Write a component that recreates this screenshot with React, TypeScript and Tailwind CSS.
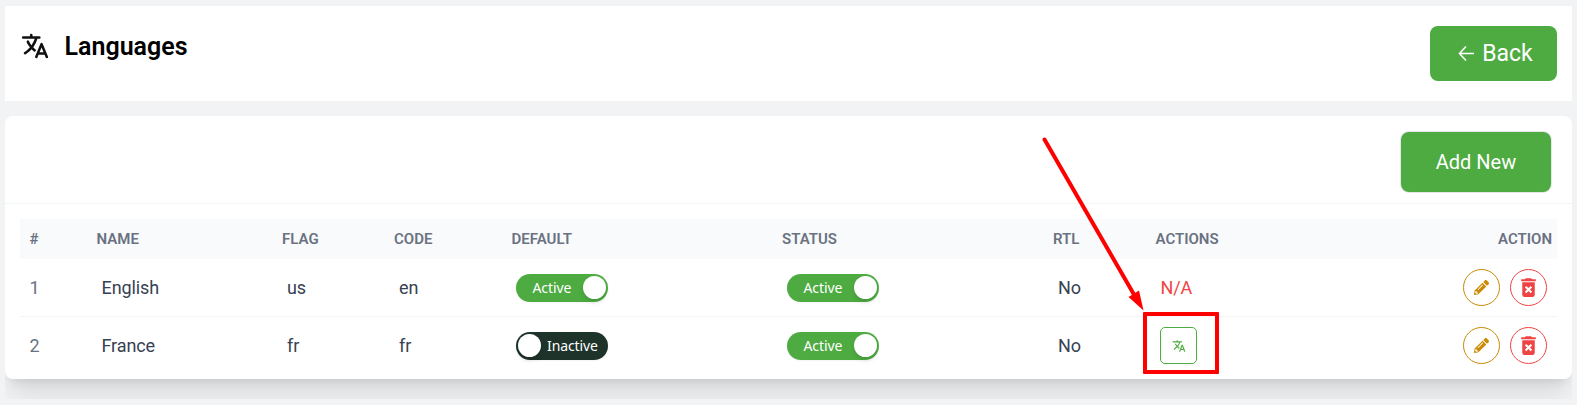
import clsx from "clsx";
import { FaPencilAlt } from "react-icons/fa";
import { IoLanguage } from "react-icons/io5";
import { MdDeleteForever, MdTranslate } from "react-icons/md";

type Language = {
  id: number;
  name: string;
  flag: string;
  code: string;
  isDefault: boolean;
  status: boolean;
  rtl: boolean;
  translatable: boolean;
};

const languages: Language[] = [
  { id: 1, name: "English", flag: "us", code: "en", isDefault: true, status: true, rtl: false, translatable: false },
  { id: 2, name: "France", flag: "fr", code: "fr", isDefault: false, status: true, rtl: false, translatable: true },
];

const columns =
  "grid grid-cols-[67px_185.5px_112px_117.5px_270.5px_271px_102.5px_1fr_auto] items-center pl-[9.5px]";

function Toggle({ on }: { on: boolean }) {
  return (
    <button
      aria-checked={on}
      className={clsx(
        "flex h-7 w-[92px] items-center rounded-full px-[2px] font-['Noto_Sans'] text-[14px] tracking-[-0.1px] text-white shadow-xs",
        on ? "justify-between bg-[#4dab41]" : "bg-[#1e3329]",
      )}
      role="switch"
      type="button"
    >
      {on ? <span className="ml-[14.5px]">Active</span> : null}
      <span className="size-[23px] shrink-0 rounded-full bg-white shadow-md" />
      {on ? null : <span className="ml-[6px]">Inactive</span>}
    </button>
  );
}

function Header() {
  return (
    <header className="flex h-[95px] items-start justify-between bg-white pt-5 pr-[15px] pl-[15px]">
      <div className="flex items-start pt-[5px]">
        <IoLanguage className="size-[30px] text-[#111]" />
        <h1 className="mt-px ml-[14.5px] text-[25px] leading-[30px] font-semibold text-black">
          Languages
        </h1>
      </div>
      <button
        className="flex h-[55px] w-[127px] items-center justify-center rounded-lg bg-[#4dab41] pl-1 text-[23px] text-white"
        type="button"
      >
        <svg className="mr-2 h-4 w-4" fill="none" stroke="currentColor" strokeWidth="1.6" viewBox="0 0 16 16">
          <path d="M16 7.500H1.500M8 .5L1.500 7.500l6.500 7" />
        </svg>
        <span className="pt-[2px]">Back</span>
      </button>
    </header>
  );
}

function LanguageRow({ language }: { language: Language }) {
  return (
    <div
      className={clsx(
        columns,
        "h-[58px] border-b border-gray-100 text-[18px] tracking-[-0.1px] text-gray-700 last:h-[57px] last:border-0",
      )}
    >
      <span className="text-gray-500">{language.id}</span>
      <span className="pl-[5px]">{language.name}</span>
      <span className="pl-[5px]">{language.flag}</span>
      <span className="pl-[5px]">{language.code}</span>
      <div className="pl-[4.5px]">
        <Toggle on={language.isDefault} />
      </div>
      <div className="pl-[5px]">
        <Toggle on={language.status} />
      </div>
      <span className="pl-[5px]">{language.rtl ? "Yes" : "No"}</span>
      {language.translatable ? (
        <div className="relative pl-[4px]">
          <button
            className="flex size-[37px] items-center justify-center rounded-[5px] border border-[#4dab41] text-[#4dab41]"
            type="button"
          >
            <MdTranslate className="ml-px size-[14px]" />
          </button>
          <div className="pointer-events-none absolute -top-[15px] -left-[13px] h-[62px] w-[76px] rounded-[1px] border-4 border-[#ff0000]" />
        </div>
      ) : (
        <span className="pl-[5px] text-[#ef4444]">N/A</span>
      )}
      <div className="flex gap-[10px] pr-[10px]">
        <button
          className="flex size-[37px] items-center justify-center rounded-full border border-[#ca8a04] text-[#ca8a04]"
          type="button"
        >
          <FaPencilAlt className="size-[15px]" />
        </button>
        <button
          className="flex size-[37px] items-center justify-center rounded-full border border-[#ef4444] text-[#ef4444]"
          type="button"
        >
          <MdDeleteForever className="size-[25px]" />
        </button>
      </div>
    </div>
  );
}

export default function App() {
  return (
    <main className="relative h-[405px] overflow-hidden bg-[#f2f3f5] px-[5px] pt-[6px] font-[Roboto,sans-serif]">
      <Header />
      <div className="mt-[15px] h-[283px] overflow-hidden">
        <section className="h-[263px] rounded-lg bg-white shadow-xl">
          <div className="flex h-[88px] items-start justify-end border-b border-gray-100 pt-4 pr-[21px]">
            <button
              className="h-[60px] w-[150px] rounded-lg bg-[#4dab41] text-[20px] text-white ring-1 ring-gray-200"
              type="button"
            >
              Add New
            </button>
          </div>
          <div className="px-[15px] pt-[15px]">
            <div className={clsx(columns, "h-10 bg-gray-50 text-[15px] font-semibold text-gray-500")}>
              <span>#</span>
              <span>NAME</span>
              <span>FLAG</span>
              <span>CODE</span>
              <span>DEFAULT</span>
              <span>STATUS</span>
              <span>RTL</span>
              <span>ACTIONS</span>
              <span className="pr-[5px]">ACTION</span>
            </div>
            {languages.map((language) => (
              <LanguageRow key={language.id} language={language} />
            ))}
          </div>
        </section>
      </div>
      <svg className="pointer-events-none absolute top-[130px] left-[1034px] h-[185px] w-[120px]" viewBox="0 0 120 185">
        <path d="M10.500 9.500L102 168" fill="none" stroke="#ff0000" strokeLinecap="round" strokeWidth="4" />
        <path d="M109.500 180.500L94.500 167L105 160.500z" fill="#ff0000" />
      </svg>
    </main>
  );
}
